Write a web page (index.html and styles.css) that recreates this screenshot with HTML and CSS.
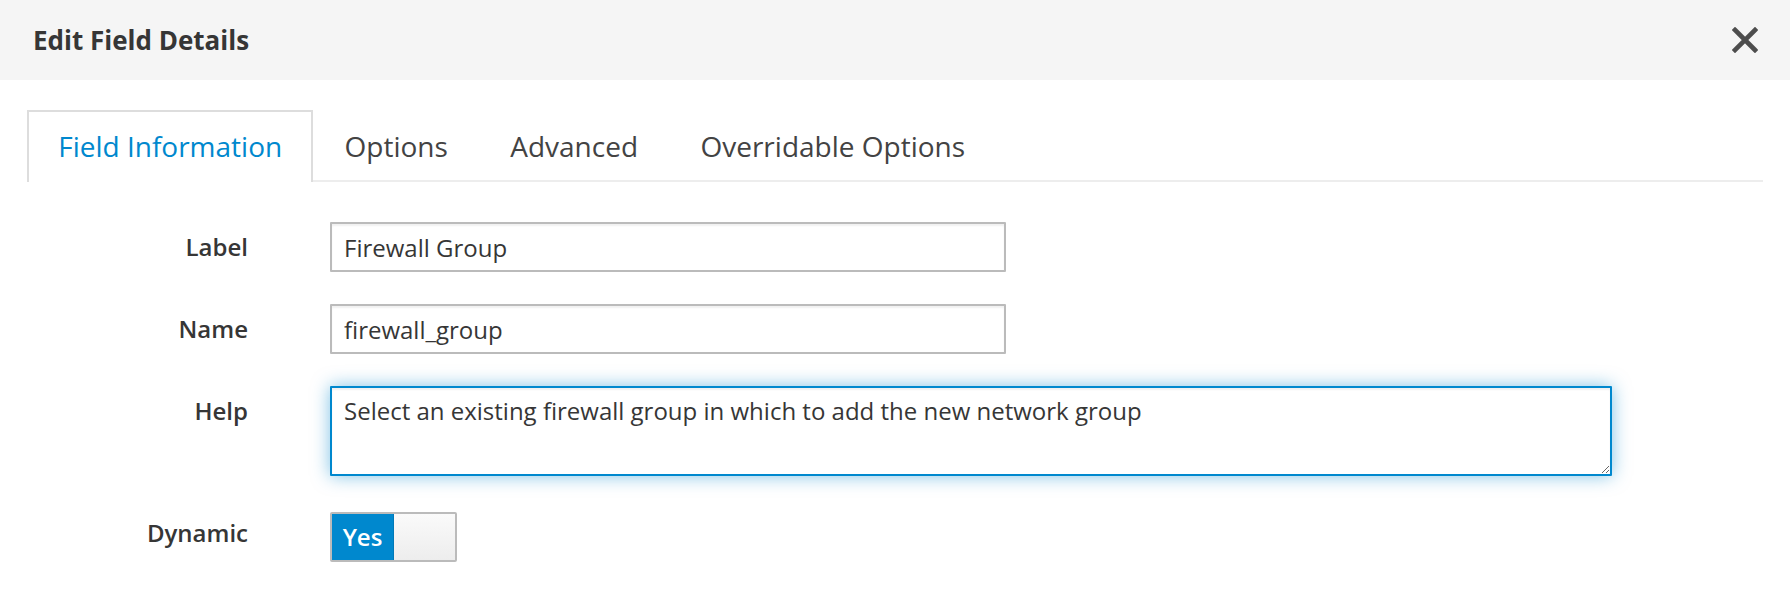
FILE: index.html
```html
<!DOCTYPE html>
<html lang="en">
<head>
<meta charset="utf-8">
<title>Edit Field Details</title>
<link rel="stylesheet" href="styles.css">
</head>
<body>
<div class="modal">
  <div class="modal-header">
    <h4 class="modal-title">Edit Field Details</h4>
    <button class="close" type="button" aria-label="Close">
      <svg width="26" height="26" viewBox="0 0 26 26" aria-hidden="true">
        <path d="M3 3 L23 23 M23 3 L3 23" stroke="#4d4d4d" stroke-width="4.6" fill="none" stroke-linecap="square"/>
      </svg>
    </button>
  </div>
  <div class="modal-body">
    <ul class="tabs">
      <li class="tab active">Field Information</li>
      <li class="tab">Options</li>
      <li class="tab">Advanced</li>
      <li class="tab">Overridable Options</li>
    </ul>
    <form class="form">
      <div class="row">
        <label class="label">Label</label>
        <input class="input" type="text" value="Firewall Group">
      </div>
      <div class="row">
        <label class="label">Name</label>
        <input class="input" type="text" value="firewall_group">
      </div>
      <div class="row">
        <label class="label">Help</label>
        <textarea class="textarea focused">Select an existing firewall group in which to add the new network group</textarea>
      </div>
      <div class="row row-toggle">
        <label class="label">Dynamic</label>
        <div class="switch">
          <span class="switch-on">Yes</span>
          <span class="switch-handle"></span>
        </div>
      </div>
    </form>
  </div>
</div>
</body>
</html>
```

FILE: styles.css
```css
* { box-sizing: border-box; }
html, body {
  margin: 0;
  padding: 0;
  background: #fff;
}
body {
  font-family: "Open Sans", "Noto Sans", sans-serif;
  color: #363636;
  width: 1790px;
  height: 612px;
  overflow: hidden;
}
.modal-header {
  height: 80px;
  background: #f5f5f5;
  display: flex;
  align-items: center;
  justify-content: space-between;
  padding: 0 31px 0 33px;
}
.modal-title {
  margin: 0;
  font-size: 26px;
  font-weight: 700;
  line-height: 80px;
  color: #363636;
}
.close {
  border: 0;
  background: transparent;
  padding: 0;
  width: 28px;
  height: 28px;
  display: flex;
  align-items: center;
  justify-content: center;
}
.modal-body {
  padding: 30px 27px 0;
}
.tabs {
  list-style: none;
  margin: 0;
  padding: 0;
  display: flex;
  border-bottom: 2px solid #ededed;
  height: 72px;
}
.tab {
  height: 72px;
  margin-bottom: -2px;
  padding: 0 29.2px;
  border: 2px solid transparent;
  border-bottom: 0;
  font-size: 28px;
  line-height: 69px;
  color: #434343;
  white-space: nowrap;
}
.tab.active {
  border-color: #dddddd;
  background: #fff;
  color: #0088ce;
}
.form {
  margin-top: 40px;
  display: flex;
  flex-direction: column;
  gap: 32px;
}
.row {
  display: grid;
  grid-template-columns: 221px auto;
  column-gap: 82px;
  align-items: start;
}
.row-toggle {
  margin-top: 4px;
}
.label {
  font-size: 24px;
  font-weight: 600;
  line-height: 50px;
  text-align: right;
  color: #363636;
}
.row-toggle .label {
  line-height: 42px;
}
.input, .textarea {
  font-family: "Open Sans", "Noto Sans", sans-serif;
  font-size: 24px;
  color: #363636;
  border: 2px solid #bbbbbb;
  border-radius: 1px;
  background: #fff;
  box-shadow: inset 0 2px 2px rgba(0, 0, 0, 0.06);
  outline: none;
  margin: 0;
}
.input {
  width: 676px;
  height: 50px;
  padding: 0 12px;
}
.textarea {
  width: 1282px;
  height: 90px;
  padding: 10px 12px;
  line-height: 26px;
  resize: both;
  display: block;
}
.textarea.focused {
  border-color: #0088ce;
  box-shadow: inset 0 2px 2px rgba(0, 0, 0, 0.06), 0 0 18px rgba(0, 136, 206, 0.5);
}
.switch {
  width: 127px;
  height: 50px;
  border: 2px solid #bbbbbb;
  border-radius: 2px;
  display: flex;
  overflow: hidden;
}
.switch-on {
  width: 62px;
  background: #0088ce;
  border-right: 1px solid #0079b8;
  color: #fff;
  font-size: 24px;
  font-weight: 600;
  line-height: 46px;
  text-align: center;
}
.switch-handle {
  flex: 1;
  background: linear-gradient(#fafafa, #ededed);
}
```
